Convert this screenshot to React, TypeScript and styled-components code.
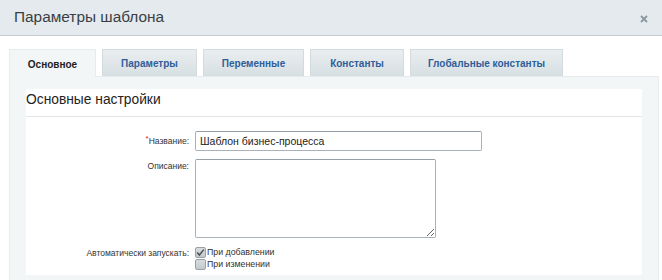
import React from "react";
import styled, { createGlobalStyle } from "styled-components";

const Global = createGlobalStyle`
  html, body { margin: 0; padding: 0; background: #fff; }
  body { font-family: "Liberation Sans", Arial, sans-serif; color: #333; }
  * { box-sizing: border-box; }
`;

const Page = styled.div`
  width: 662px;
  height: 280px;
  overflow: hidden;
  background: #fff;
`;

const Header = styled.div`
  height: 36px;
  background: #e4eaed;
  border-bottom: 1px solid #c5cbce;
  display: flex;
  align-items: center;
  justify-content: space-between;
  padding: 0 13px 0 14px;
`;

const Title = styled.div`
  font-size: 15.4px;
  color: #3a3f44;
  padding-bottom: 2px;
`;

const Close = styled.button`
  border: 0;
  background: none;
  padding: 0;
  width: 10px;
  height: 10px;
  display: flex;
  margin-top: 2px;
  cursor: pointer;
`;

const Body = styled.div`
  padding: 13px 3px 0 9px;
`;

const Tabs = styled.div`
  display: flex;
  gap: 6px;
  height: 27px;
`;

const Tab = styled.div<{ $active?: boolean; $w: number }>`
  width: ${(p) => p.$w}px;
  height: ${(p) => (p.$active ? 28 : 27)}px;
  display: flex;
  align-items: center;
  justify-content: center;
  font-size: 10px;
  font-weight: bold;
  color: ${(p) => (p.$active ? "#1d1d1d" : "#2f5e99")};
  background: ${(p) =>
    p.$active ? "#f3f6f7" : "linear-gradient(#e9eef0, #d7dfe2)"};
  border: 1px solid ${(p) => (p.$active ? "#e6ebed" : "#d4dbde")};
  border-bottom: 0;
  padding-top: 1px;
  position: relative;
  z-index: ${(p) => (p.$active ? 1 : 0)};
`;

const Panel = styled.div`
  background: #f3f6f7;
  border: 1px solid #e6ebed;
  padding: 12px 16px 30px 16px;
`;

const Card = styled.div`
  background: #fff;
`;

const CardTitle = styled.div`
  height: 28px;
  border-bottom: 1px solid #e1e5e7;
  font-size: 13.8px;
  color: #222;
  padding: 3px 0 0 0;
`;

const Form = styled.div`
  display: grid;
  grid-template-columns: 163px 1fr;
  column-gap: 6px;
  row-gap: 8px;
  padding: 14px 0 5px 0;
`;

const Label = styled.div<{ $center?: boolean }>`
  font-size: 8.5px;
  color: #333;
  text-align: right;
  display: flex;
  justify-content: flex-end;
  align-items: ${(p) => (p.$center ? "center" : "flex-start")};
  padding-top: ${(p) => (p.$center ? 0 : 2)}px;
`;

const Req = styled.span`
  color: #d42020;
  font-size: 8px;
  position: relative;
  top: -3px;
`;

const TextInput = styled.input`
  width: 287px;
  height: 20px;
  border: 1px solid #a9b2b9;
  border-top-color: #969fa6;
  border-radius: 2px;
  font-family: "Liberation Sans", Arial, sans-serif;
  font-size: 10.5px;
  color: #222;
  padding: 0 4px;
  outline: none;
`;

const TextArea = styled.textarea`
  width: 241px;
  height: 79px;
  border: 1px solid #a9b2b9;
  border-top-color: #969fa6;
  border-radius: 2px;
  outline: none;
  display: block;
  resize: both;
`;

const Checks = styled.div`
  display: flex;
  flex-direction: column;
  gap: 0;
`;

const CheckRow = styled.label`
  display: flex;
  align-items: center;
  gap: 1px;
  font-size: 8.8px;
  color: #333;
  height: 12px;
`;

const Box = styled.span`
  width: 11px;
  height: 11px;
  border: 1px solid #9aa1a6;
  border-radius: 2px;
  background: linear-gradient(#d8dcdf, #c3c8cb);
  display: flex;
  align-items: center;
  justify-content: center;
`;

const Check = ({ checked, label }: { checked?: boolean; label: string }) => (
  <CheckRow>
    <Box>
      {checked && (
        <svg width="9" height="9" viewBox="0 0 9 9">
          <path d="M1.2 4.6 L3.4 7 L7.8 1.6" fill="none" stroke="#4a4f53" strokeWidth="1.5" />
        </svg>
      )}
    </Box>
    {label}
  </CheckRow>
);

const tabs = [
  { t: "Основное", w: 87, active: true },
  { t: "Параметры", w: 95 },
  { t: "Переменные", w: 101 },
  { t: "Константы", w: 94 },
  { t: "Глобальные константы", w: 153 },
];

export default function App() {
  return (
    <Page>
      <Global />
      <Header>
        <Title>Параметры шаблона</Title>
        <Close aria-label="close">
          <svg width="10" height="10" viewBox="0 0 10 10">
            <path d="M2 2 L8 8 M8 2 L2 8" stroke="#8a97a0" strokeWidth="1.8" />
          </svg>
        </Close>
      </Header>
      <Body>
        <Tabs>
          {tabs.map((x) => (
            <Tab key={x.t} $w={x.w} $active={x.active}>
              {x.t}
            </Tab>
          ))}
        </Tabs>
        <Panel>
          <Card>
            <CardTitle>Основные настройки</CardTitle>
            <Form>
              <Label $center>
                <Req>*</Req>Название:
              </Label>
              <div>
                <TextInput defaultValue="Шаблон бизнес-процесса" />
              </div>
              <Label>Описание:</Label>
              <div>
                <TextArea />
              </div>
              <Label>Автоматически запускать:</Label>
              <Checks>
                <Check checked label="При добавлении" />
                <Check label="При изменении" />
              </Checks>
            </Form>
          </Card>
        </Panel>
      </Body>
    </Page>
  );
}
